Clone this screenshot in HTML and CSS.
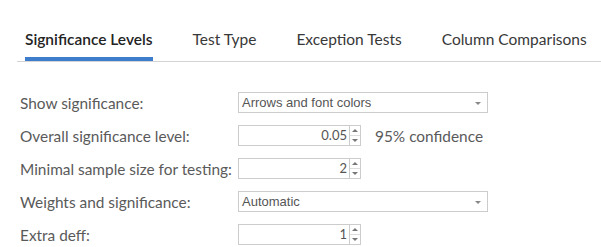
FILE: index.html
```html
<!DOCTYPE html>
<html lang="en">
<head>
  <meta charset="UTF-8" />
  <title>Significance Options</title>
  <link rel="stylesheet" href="styles.css">
</head>
<body>

  <div class="tabs">
    <div class="tab active">Significance Levels</div>
    <div class="tab">Test Type</div>
    <div class="tab">Exception Tests</div>
    <div class="tab">Column Comparisons</div>
  </div>

  <div class="form">
    <div class="row">
      <label>Show significance:</label>
      <div class="select">
        <span>Arrows and font colors</span>
        <span class="caret"></span>
      </div>
    </div>

    <div class="row">
      <label>Overall significance level:</label>
      <div class="number">
        <span class="value">0.05</span>
        <span class="spin"><i class="up"></i><i class="down"></i></span>
      </div>
      <span class="note">95% confidence</span>
    </div>

    <div class="row">
      <label>Minimal sample size for testing:</label>
      <div class="number">
        <span class="value">2</span>
        <span class="spin"><i class="up"></i><i class="down"></i></span>
      </div>
    </div>

    <div class="row">
      <label>Weights and significance:</label>
      <div class="select">
        <span>Automatic</span>
        <span class="caret"></span>
      </div>
    </div>

    <div class="row">
      <label>Extra deff:</label>
      <div class="number">
        <span class="value">1</span>
        <span class="spin"><i class="up"></i><i class="down"></i></span>
      </div>
    </div>
  </div>

</body>
</html>
```

FILE: styles.css
```css
* {
  box-sizing: border-box;
}
body {
  margin: 0;
  background: #fff;
  font-family: Lato, 'Open Sans', sans-serif;
  color: #5a5a5a;
}

/* Tabs */
.tabs {
  display: flex;
  gap: 40px;
  margin-left: 17px;
  padding: 30px 0 0 8px;
  border-bottom: 1px solid #d4d4d4;
}

.tab {
  font-size: 15.5px;
  line-height: 18px;
  color: #383838;
  padding-bottom: 9px;
  border-bottom: 4px solid transparent;
}

.tab.active {
  color: #222;
  font-weight: 600;
  border-bottom-color: #3d7dcb;
}

/* Form */
.form {
  padding: 24px 0 0 20px;
}

.row {
  display: flex;
  align-items: center;
  height: 33px;
}

.row label {
  width: 218px;
  font-size: 15.4px;
}

.select {
  width: 250px;
  height: 21px;
  border: 1px solid #ccc;
  display: flex;
  align-items: center;
  justify-content: space-between;
  padding: 0 6px 0 3px;
  font-family: 'Liberation Sans', Arial, sans-serif;
  font-size: 13px;
  color: #555;
}

.caret {
  width: 0;
  height: 0;
  border-left: 3px solid transparent;
  border-right: 3px solid transparent;
  border-top: 3px solid #888;
  margin-top: 1px;
}

.number {
  width: 123px;
  height: 21px;
  border: 1px solid #ccc;
  display: flex;
  align-items: stretch;
  font-size: 13px;
  color: #555;
}

.number .value {
  flex: 1;
  text-align: right;
  padding-right: 2px;
  line-height: 19px;
}

.spin {
  width: 11px;
  border-left: 1px solid #ccc;
  display: flex;
  flex-direction: column;
}

.spin i {
  flex: 1;
  position: relative;
}

.spin .up {
  border-bottom: 1px solid #ddd;
}

.spin i::after {
  content: '';
  position: absolute;
  left: 2px;
  top: 3px;
  border-left: 3px solid transparent;
  border-right: 3px solid transparent;
}

.spin .up::after {
  border-bottom: 3px solid #777;
}

.spin .down::after {
  border-top: 3px solid #777;
}

.note {
  margin-left: 14px;
  font-size: 15.4px;
}
```
